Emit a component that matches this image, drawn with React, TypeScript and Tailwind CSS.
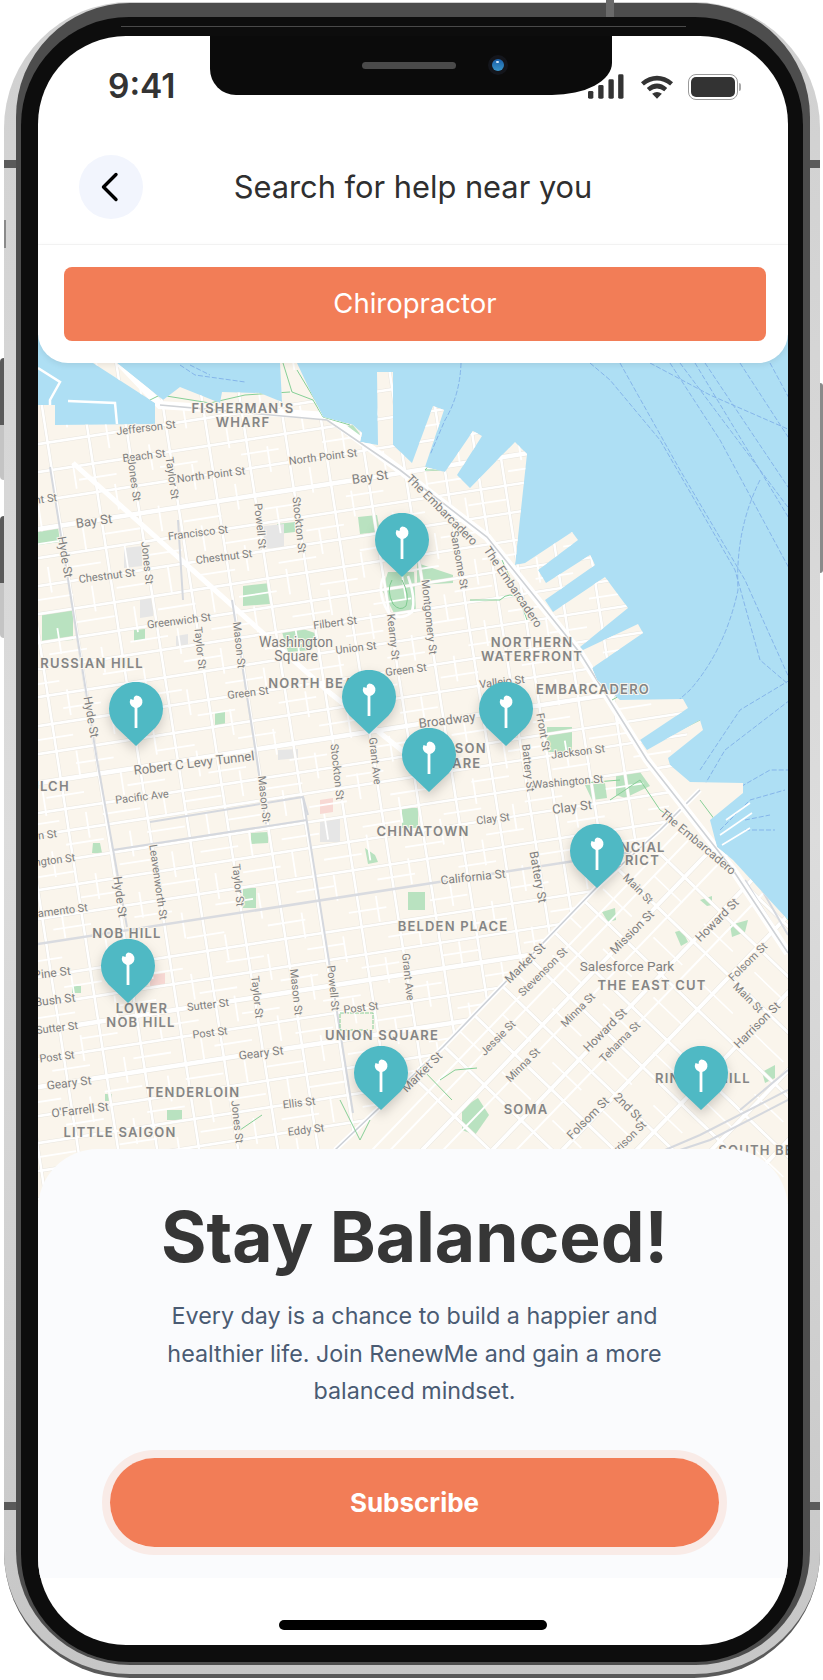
import React from "react";

// street centre lines, as intercepts read off the reference (y at x=0 / x at y=0)
const SLOPE = 0.155;
const ewMajor = [535, 789, 1093, 1037];
const ewRoads = [450, 478, 507, 564, 592, 620, 649, 675, 703, 732, 760, 819, 841, 870, 896, 925, 983, 1011, 1065, 1122, 1149, 1177, 1205, 1232];
const ewAlleys = [492, 550, 578, 606, 634, 662, 690, 718, 746, 775, 805, 830, 855, 883, 910, 938, 967, 997, 1024, 1051, 1079, 1108, 1135, 1163];
const nsRoads = [-140, -100, -60, -21, 21, 60, 100, 140, 178, 218, 256, 294, 332, 372, 405, 430, 470, 505];
const nsAlleys = [-80, -40, 1, 40, 80, 120, 160, 198, 237, 275, 313, 352, 388, 450];
const neRoads = [1537, 1556, 1611, 1687];
const neMajor = [1589, 1662, 1735, 1812, 1890, 1960];
const nwRoads = [170, 220, 276, 340, 400, 450, 504, 560, 620, 680];
const nwAlleys = [248, 310, 370, 425, 478, 532, 590];

const land =
  "M38 405 L55 405 L55 425 L155 424 L155 403 L93 363 L117 363 L163 400 L180 387 L220 403 L222 392 L260 393 L282 402 L280 363 L297 363 L313 397 L323 417 L353 425 L362 433 L360 442 L378 445 L377 372 L393 372 L393 445 L412 463 L433 406 L444 410 L425 467 L445 472 L473 431 L482 436 L457 475 L470 488 L515 442 L527 454 L515 565 L525 563 L572 532 L578 540 L538 570 L546 583 L590 555 L595 565 L545 600 L553 612 L605 577 L628 608 L580 647 L583 650 L638 624 L643 633 L592 668 L597 680 L620 700 L683 699 L688 708 L640 740 L647 750 L700 720 L703 730 L668 758 L670 765 L690 782 L743 783 L743 793 L710 820 L717 847 L733 860 L788 920 L788 1210 L38 1210 Z";

const parks = [
  "M42 612 L73 610 L73 640 L42 642 Z",
  "M243 586 L270 583 L270 604 L243 606 Z",
  "M277 524 L295 522 L295 532 L277 534 Z",
  "M134 630 L145 629 L145 640 L134 641 Z",
  "M215 712 L225 711 L225 726 L215 727 Z",
  "M358 517 L377 515 L380 532 L360 534 Z",
  "M388 572 L414 572 L416 612 L395 615 L382 590 Z",
  "M417 563 L453 575 L453 583 L417 585 Z",
  "M282 632 L300 628 L318 634 L312 650 L288 652 Z",
  "M547 727 L572 727 L572 752 L547 752 Z",
  "M251 833 L268 832 L268 843 L251 844 Z",
  "M243 888 L256 888 L256 908 L243 908 Z",
  "M402 808 L418 808 L418 828 L402 828 Z",
  "M408 892 L425 892 L425 910 L408 910 Z",
  "M167 1110 L182 1110 L182 1120 L167 1120 Z",
  "M72 986 L81 986 L81 993 L72 993 Z",
  "M105 1094 L112 1094 L112 1101 L105 1101 Z",
  "M365 848 L375 855 L378 862 L368 864 Z",
  "M93 843 L100 843 L102 853 L92 853 Z",
  "M616 775 L640 772 L650 786 L625 798 L616 795 Z",
  "M585 785 L605 783 L607 798 L592 800 Z",
  "M602 912 L615 908 L616 920 L608 922 Z",
  "M675 932 L682 930 L688 942 L681 946 Z",
  "M730 925 L748 920 L745 932 L732 937 Z",
  "M700 900 L712 896 L712 905 L707 906 Z",
  "M762 1072 L775 1065 L775 1078 L765 1083 Z",
  "M462 1108 L478 1098 L489 1115 L475 1135 L462 1130 Z",
  "M326 420 L352 424 L360 434 L358 442 Z",
  "M38 530 L58 527 L60 542 L38 545 Z",
];

const grayBlocks = [
  "M124 548 L142 546 L142 566 L124 568 Z",
  "M264 526 L284 524 L284 548 L264 548 Z",
  "M140 600 L153 598 L153 616 L140 618 Z",
  "M176 636 L188 634 L188 646 L176 646 Z",
  "M320 820 L340 818 L340 842 L320 842 Z",
  "M278 750 L298 749 L298 758 L278 760 Z",
];

const ferries = [
  "M461 363 Q460 395 445 420 L430 455",
  "M590 363 L610 380 L660 440 L735 570 L760 660 L795 690",
  "M620 363 L680 470 L745 580 L790 680",
  "M670 363 L720 440 L790 570",
  "M680 363 L760 470 L790 510",
  "M695 363 L790 520",
  "M705 363 L790 490",
  "M650 363 L710 395 L790 430",
  "M740 363 L790 440",
  "M770 363 L790 400",
  "M760 480 Q735 530 738 590 Q725 650 690 690 L645 730",
  "M790 680 L740 710 L700 770",
  "M790 700 L725 750 L690 810",
  "M735 790 L770 770 L788 770",
  "M720 830 L750 800 L785 790",
  "M745 820 L770 815 M745 830 L775 830",
  "M180 365 L195 375 L245 382",
  "M190 365 L210 375",
];

type MapLabel = [string, number, number, number, number?];

// text, x, y, rotation, size
const streetLabels: MapLabel[] = [
  ["Jefferson St", 146, 428, -7],
  ["Beach St", 144, 456, -7],
  ["Jones St", 134, 480, 82],
  ["Taylor St", 172, 478, 82],
  ["North Point St", 211, 475, -7],
  ["North Point St", 323, 457, -7],
  ["Bay St", 370, 477, -8, 13],
  ["Bay St", 94, 521, -8, 13],
  ["Point St", 38, 500, -7],
  ["Francisco St", 198, 533, -7],
  ["Powell St", 260, 526, 84],
  ["Stockton St", 299, 525, 84],
  ["Chestnut St", 224, 557, -7],
  ["Chestnut St", 107, 576, -7],
  ["Jones St", 147, 563, 84],
  ["Hyde St", 65, 557, 80, 12],
  ["Greenwich St", 179, 621, -7],
  ["Taylor St", 200, 648, 84],
  ["Mason St", 239, 645, 84],
  ["Filbert St", 335, 623, -7],
  ["Union St", 356, 648, -7],
  ["Green St", 406, 670, -7],
  ["Green St", 248, 693, -7],
  ["Kearny St", 393, 637, 84],
  ["Montgomery St", 429, 617, 84],
  ["Hyde St", 91, 717, 80, 12],
  ["Broadway", 447, 720, -7, 13],
  ["Robert C Levy Tunnel", 194, 763, -7, 13],
  ["Stockton St", 337, 772, 84],
  ["Grant Ave", 375, 761, 84],
  ["The Embarcadero", 442, 510, 45, 12],
  ["The Embarcadero", 513, 587, 56, 12],
  ["Sansome St", 459, 560, 80],
  ["Vallejo St", 502, 682, -7],
  ["Front St", 543, 732, 80],
  ["Jackson St", 578, 752, -7],
  ["Battery St", 528, 768, 84],
  ["Pacific Ave", 142, 797, -7],
  ["Mason St", 264, 799, 84],
  ["Washington St", 40, 862, -7],
  ["Jackson St", 30, 837, -7],
  ["Leavenworth St", 158, 882, 82],
  ["Hyde St", 120, 897, 82, 12],
  ["Taylor St", 238, 885, 84],
  ["Sacramento St", 52, 912, -7],
  ["California St", 473, 877, -6, 12],
  ["Market St", 525, 963, -45, 12],
  ["Stevenson St", 543, 972, -45],
  ["Main St", 638, 889, 45],
  ["Mission St", 632, 932, -45, 12],
  ["Howard St", 717, 920, -45, 12],
  ["The Embarcadero", 698, 842, 40, 12],
  ["Clay St", 572, 807, -7, 13],
  ["Clay St", 493, 819, -7],
  ["Washington St", 568, 782, -5],
  ["Battery St", 538, 877, 80, 12],
  ["Grant Ave", 408, 977, 84],
  ["Folsom St", 748, 962, -45],
  ["Main St", 748, 998, 45],
  ["Harrison St", 757, 1025, -45, 12],
  ["Minna St", 578, 1010, -45],
  ["Howard St", 605, 1030, -45, 12],
  ["Tehama St", 620, 1042, -45],
  ["Jessie St", 498, 1038, -45],
  ["Minna St", 523, 1065, -45],
  ["Folsom St", 588, 1118, -45, 12],
  ["2nd St", 628, 1107, 45, 12],
  ["Harrison St", 625, 1142, -45],
  ["Market St", 422, 1072, -45, 12],
  ["Sutter St", 208, 1005, -7],
  ["Taylor St", 257, 997, 84],
  ["Mason St", 296, 992, 84],
  ["Powell St", 333, 988, 84],
  ["Post St", 361, 1008, -7],
  ["Post St", 210, 1033, -7],
  ["Geary St", 261, 1053, -7, 12],
  ["Pine St", 52, 973, -7, 12],
  ["Bush St", 55, 1000, -7, 12],
  ["Sutter St", 57, 1028, -7],
  ["Post St", 57, 1057, -7],
  ["Geary St", 69, 1083, -7, 12],
  ["O'Farrell St", 80, 1110, -7, 12],
  ["Jones St", 237, 1122, 84],
  ["Ellis St", 299, 1103, -7],
  ["Eddy St", 306, 1130, -7],
];

const areaLabels: [string, number, number][] = [
  ["FISHERMAN'S", 243, 408],
  ["WHARF", 243, 422],
  ["RUSSIAN HILL", 92, 663],
  ["NORTH BEACH", 322, 683],
  ["NORTHERN", 532, 642],
  ["WATERFRONT", 532, 656],
  ["EMBARCADERO", 593, 689],
  ["JACKSON", 451, 748],
  ["SQUARE", 451, 763],
  ["GULCH", 44, 786],
  ["NOB HILL", 127, 933],
  ["BELDEN PLACE", 453, 926],
  ["CHINATOWN", 423, 831],
  ["FINANCIAL", 625, 847],
  ["DISTRICT", 625, 860],
  ["THE EAST CUT", 652, 985],
  ["RINCON HILL", 703, 1078],
  ["SOMA", 526, 1109],
  ["SOUTH BEACH", 772, 1150],
  ["LOWER", 142, 1008],
  ["NOB HILL", 141, 1022],
  ["UNION SQUARE", 382, 1035],
  ["TENDERLOIN", 193, 1092],
  ["LITTLE SAIGON", 120, 1132],
];

const pins = [
  { id: "coit", left: 375, top: 513 },
  { id: "polk", left: 109, top: 682 },
  { id: "beach", left: 342, top: 670 },
  { id: "front", left: 479, top: 682 },
  { id: "jackson", left: 402, top: 728 },
  { id: "fidi", left: 570, top: 824 },
  { id: "nob", left: 101, top: 939 },
  { id: "union", left: 354, top: 1046 },
  { id: "rincon", left: 674, top: 1046 },
];

const MARKET = "M700 790 L660 830 L597 887 L443 1047 L335 1150";
const EMBARCADERO = "M160 405 L327 420 L400 470 L487 537 L580 653 L647 760 L733 870 L788 953";

function StreetMap() {
  const ew = (c: number) => ({ x1: 0, y1: c, x2: 823, y2: c - SLOPE * 823 });
  const ns = (c: number) => ({ x1: c + SLOPE * 300, y1: 300, x2: c + SLOPE * 1300, y2: 1300 });
  const ne = (c: number) => ({ x1: 300, y1: c - 1.04 * 300, x2: 823, y2: c - 1.04 * 823 });
  const nw = (c: number) => ({ x1: 300, y1: c + 0.96 * 300, x2: 823, y2: c + 0.96 * 823 });

  return (
    <svg width="750" height="872" viewBox="38 335 750 872" className="block">
      <defs>
        <clipPath id="land">
          <path d={land} />
        </clipPath>
        <clipPath id="north">
          <path d="M38 335 L788 335 L664 826 L597 887 L443 1047 L335 1150 L300 1210 L38 1210 Z" />
        </clipPath>
        <clipPath id="south">
          <path d="M664 826 L800 880 L800 1210 L300 1210 L335 1150 L443 1047 L597 887 Z" />
        </clipPath>
      </defs>

      <rect x="38" y="335" width="750" height="872" fill="#aedff4" />

      <g fill="none" stroke="#85b5ea" strokeWidth="1" strokeDasharray="5 2">
        {ferries.map((d) => (
          <path key={d} d={d} />
        ))}
      </g>

      {/* old piers that are only a white outline */}
      <g fill="none" stroke="#ffffff">
        <path d="M38 368 L60 382 L50 400 L50 408" strokeWidth="2.5" />
        <path d="M68 401 L115 403 L117 424" strokeWidth="2.5" />
        <path d="M722 845 L750 828 M720 835 L752 813 M726 820 L750 803" strokeWidth="1.6" />
      </g>

      <path d={land} fill="#faf5ec" />

      <g clipPath="url(#land)">
        {parks.map((d) => (
          <path key={d} d={d} fill="#b9e2c0" />
        ))}
        {grayBlocks.map((d) => (
          <path key={d} d={d} fill="#e6e6e6" />
        ))}
        <path d="M320 800 L333 798 L333 812 L320 814 Z" fill="#f8d9d4" />
        <path d="M150 975 L165 973 L165 985 L150 987 Z" fill="#f8d9d4" />

        <g clipPath="url(#north)" fill="none">
          {/* light casing under the white streets */}
          <g stroke="#e9e6df">
            {ewRoads.map((c) => (
              <line key={c} {...ew(c)} strokeWidth="3.6" />
            ))}
            {nsRoads.map((c) => (
              <line key={c} {...ns(c)} strokeWidth="3.6" />
            ))}
            {ewMajor.map((c) => (
              <line key={c} {...ew(c)} strokeWidth="5.6" />
            ))}
          </g>
          <g stroke="#ffffff">
            {ewAlleys.map((c) => (
              <line key={c} {...ew(c)} strokeWidth="1.8" strokeDasharray="38 44" strokeDashoffset={c % 70} />
            ))}
            {nsAlleys.map((c) => (
              <line key={c} {...ns(c)} strokeWidth="1.8" strokeDasharray="26 36" strokeDashoffset={(c + 200) % 60} />
            ))}
            {ewRoads.map((c) => (
              <line key={c} {...ew(c)} strokeWidth="2.6" />
            ))}
            {nsRoads.map((c) => (
              <line key={c} {...ns(c)} strokeWidth="2.6" />
            ))}
            {ewMajor.map((c) => (
              <line key={c} {...ew(c)} strokeWidth="4.5" />
            ))}
            <path d="M73 463 L330 693 L404 752" strokeWidth="5" />
          </g>
          <line {...ew(950)} stroke="#d9dbe0" strokeWidth="2.5" />
        </g>

        <g clipPath="url(#south)" fill="none">
          <g stroke="#e9e6df">
            {neMajor.map((c) => (
              <line key={c} {...ne(c)} strokeWidth="5" />
            ))}
            {nwRoads.map((c) => (
              <line key={c} {...nw(c)} strokeWidth="4" />
            ))}
          </g>
          <g stroke="#ffffff">
            {nwAlleys.map((c) => (
              <line key={c} {...nw(c)} strokeWidth="1.6" strokeDasharray="40 30" />
            ))}
            {neRoads.map((c) => (
              <line key={c} {...ne(c)} strokeWidth="2" />
            ))}
            {neMajor.map((c) => (
              <line key={c} {...ne(c)} strokeWidth="4" />
            ))}
            {nwRoads.map((c) => (
              <line key={c} {...nw(c)} strokeWidth="3" />
            ))}
          </g>
        </g>

        {/* cable car lines and the big roads on top of the grid */}
        <g fill="none" stroke="#d5d8de" strokeWidth="2">
          <path d="M50 467 L97 760 L127 927" />
          <path d="M178 520 L183 600" />
          <path d="M232 600 L257 760 L266 824" />
          <path d="M303 797 L353 1113" />
          <path d="M113 850 L307 820" />
          <path d="M150 822 L303 797 L308 815" />
          <path d="M745 880 L788 950 M755 878 L788 935" />
          <path d="M788 1090 L700 1135 L665 1150 M788 1100 L710 1140 L680 1150 M788 1070 L740 1110" />
        </g>
        <path d={MARKET} fill="none" stroke="#ffffff" strokeWidth="5" />
        <path d={MARKET} fill="none" stroke="#ccd0d6" strokeWidth="1.6" />
        <path d="M120 363 L160 405 L327 416 L400 470 L487 537 L580 653 L647 760 L733 870 L788 953" fill="none" stroke="#ffffff" strokeWidth="8" />
        <path d={EMBARCADERO} fill="none" stroke="#cfd2d6" strokeWidth="1.6" />

        {/* green paths */}
        <g fill="none" stroke="#86cf96" strokeWidth="1">
          <path d="M283 363 L292 392 L313 400 L323 417 L350 425" />
          <path d="M297 370 L318 405" />
          <path d="M120 415 L160 395 L210 403 L245 395 L290 392" />
          <path d="M502 560 L520 600 L527 620 M500 600 Q510 590 520 600 M470 600 L500 600" />
          <path d="M434 460 L425 470 L440 470 L443 460 Z" />
          <path d="M612 700 L670 668" />
          <path d="M650 745 L700 720" />
          <path d="M560 785 L620 780 M610 800 L640 780 L660 810 L675 820" />
          <path d="M730 830 L760 840 M700 800 L745 860 L788 920" />
          <path d="M420 1067 L452 1100 M440 1080 L455 1070 L477 1068" />
          <path d="M340 1100 L360 1140 L370 1120" />
          <path d="M340 1013 L373 1013 L373 1030 L340 1030 Z" strokeDasharray="4 1" />
          <path d="M240 1130 L262 1115" />
          <path d="M392 580 Q386 590 393 604 Q400 612 406 606 Q410 595 402 580" stroke="#7fcb90" />
        </g>
        <path d="M384 576 Q376 590 388 612 Q400 622 412 612 Q416 598 408 576" fill="none" stroke="#ffffff" strokeWidth="2.5" />
      </g>

      <g fontFamily="Roboto, sans-serif" fill="#7f7f80" stroke="#faf5ec" strokeWidth="2" paintOrder="stroke" textAnchor="middle">
        {streetLabels.map(([text, x, y, rot, size]) => (
          <text
            key={`${text}-${x}-${y}`}
            x={x}
            y={y}
            fontSize={size ?? 11}
            dominantBaseline="central"
            transform={`rotate(${rot} ${x} ${y})`}
          >
            {text}
          </text>
        ))}
        <text x="296" y="642" fontSize="14" dominantBaseline="central">Washington</text>
        <text x="296" y="656" fontSize="14" dominantBaseline="central">Square</text>
        <text x="627" y="966" fontSize="13.5" dominantBaseline="central">Salesforce Park</text>
      </g>

      <g fontFamily="Inter, sans-serif" fontWeight="600" fontSize="13" letterSpacing="1.2" fill="#858585" stroke="#faf5ec" strokeWidth="2" paintOrder="stroke" textAnchor="middle">
        {areaLabels.map(([text, x, y]) => (
          <text key={`${text}-${x}`} x={x} y={y} dominantBaseline="central">
            {text}
          </text>
        ))}
      </g>
    </svg>
  );
}

function MapPin({ left, top }: { left: number; top: number }) {
  return (
    <svg
      width="54"
      height="64"
      viewBox="0 0 54 64"
      className="absolute drop-shadow-[0_5px_6px_rgba(0,0,0,0.18)]"
      style={{ left: left - 38, top: top - 335 }}
    >
      <path d="M27 64 L7.5 45.5 A27 27 0 1 1 46.5 45.5 Z" fill="#4fb9c4" />
      <path d="M27 13.5 A6.3 6.3 0 1 1 21.5 17 L24.5 18 L25 15 Z" fill="#ffffff" />
      <rect x="25.6" y="20" width="2.8" height="26" fill="#ffffff" />
    </svg>
  );
}

function StatusIcons() {
  return (
    <div className="flex items-center">
      <svg width="36" height="25" viewBox="0 0 37 25" className="mr-[16px]">
        <rect x="0" y="17" width="5.5" height="8" rx="1.5" fill="#333" />
        <rect x="10.5" y="11" width="5.5" height="14" rx="1.5" fill="#333" />
        <rect x="21" y="5" width="5.5" height="20" rx="1.5" fill="#333" />
        <rect x="31" y="0" width="5.5" height="25" rx="1.5" fill="#333" />
      </svg>
      <svg width="34" height="25" viewBox="0 0 35 25" className="mr-[14px]">
        <path d="M1 8 Q17.5 -5 34 8 L31 11.5 Q17.5 1 4 11.5 Z" fill="#333" />
        <path d="M7 14 Q17.5 5 28 14 L25 17.5 Q17.5 11.5 10 17.5 Z" fill="#333" />
        <path d="M12.5 20 Q17.5 16.5 22.5 20 L17.5 25 Z" fill="#333" />
      </svg>
      <div className="flex items-center gap-[1px]">
        <div className="w-[50px] h-[26px] rounded-[8px] border-[1.5px] border-[#9a9a9a] p-[2px]">
          <div className="w-full h-full rounded-[5px] bg-[#333]" />
        </div>
        <div className="w-[2px] h-[8px] rounded-r-sm bg-[#a8a8a8]" />
      </div>
    </div>
  );
}

function Notch() {
  return (
    <div className="absolute left-[172px] top-0 w-[402px] h-[59px] bg-[#0b0b0b] rounded-bl-[26px] rounded-br-[60px_32px] z-30">
      <div className="absolute left-[152px] top-[26px] w-[94px] h-[7px] rounded-full bg-[#4a4a4a]" />
      <div className="absolute left-[278px] top-[19px] w-[20px] h-[20px] rounded-full bg-[#14161c] flex items-center justify-center">
        <div className="relative w-[12px] h-[12px] rounded-full bg-gradient-to-b from-[#1a5fa8] to-[#3a94c8]">
          <div className="absolute left-[4px] top-[2px] w-[3px] h-[2px] rounded-full bg-[#cfe6f7]" />
        </div>
      </div>
    </div>
  );
}

export default function App() {
  return (
    <div className="relative w-[823px] h-[1680px] overflow-hidden bg-white [font-family:Inter,sans-serif]">
      {/* side buttons */}
      <div className="absolute left-0 top-[358px] w-[8px] h-[122px] rounded-l flex flex-col overflow-hidden">
        <div className="h-[67px] bg-[#5a5a5a]" />
        <div className="flex-1 bg-[#c4c4c4]" />
      </div>
      <div className="absolute left-0 top-[516px] w-[8px] h-[122px] rounded-l flex flex-col overflow-hidden">
        <div className="h-[67px] bg-[#5a5a5a]" />
        <div className="flex-1 bg-[#c4c4c4]" />
      </div>
      <div className="absolute right-0 top-[383px] w-[3px] h-[190px] rounded-r bg-[#8a8a8a]" />

      {/* phone frame */}
      <div className="absolute left-[4px] top-[2px] w-[816px] h-[1676px] rounded-[126px] bg-gradient-to-b from-[#d0d0d0] via-[#dcdcdc] to-[#c6c6c6] border-b-[4px] border-[#5a5a5a] pt-[1px] pl-[12px] pr-[10px] pb-[9px]">
        <div className="w-full h-full rounded-[114px] bg-[#4d4d4d] pt-[14px] pl-[5px] pr-[7px] pb-[3px]">
          <div className="relative w-full h-full rounded-[108px] bg-[#0d0d0d] pt-[19px] pl-[17px] pr-[15px] pb-[17px]">
            <div className="absolute left-[100px] top-[9px] w-[565px] h-[1px] bg-[#4a4a4a]" />
            <div className="relative w-full h-full rounded-[88px] bg-white overflow-hidden flex flex-col">
              <Notch />

              {/* status + title */}
              <div className="h-[209px] shrink-0 border-b border-[#f6f6f6] flex flex-col">
                <div className="flex items-center justify-between pt-[37px] pl-[70px] pr-[47px] h-[64px]">
                  <span className="text-[33.5px] leading-none font-semibold text-[#333]">9:41</span>
                  <StatusIcons />
                </div>
                <div className="relative flex items-center justify-center mt-[55px] h-[64px]">
                  <button className="absolute left-[41px] w-[64px] h-[64px] rounded-full bg-[#f2f5fd] flex items-center justify-center">
                    <svg width="20" height="30" viewBox="0 0 20 30" fill="none" className="-ml-[3px]">
                      <path d="M16 2.5 L3.5 15 L16 27.5" stroke="#000" strokeWidth="3.4" strokeLinecap="round" strokeLinejoin="round" />
                    </svg>
                  </button>
                  <h1 className="text-[30.8px] leading-none font-normal text-[#2f2f2f]">Search for help near you</h1>
                </div>
              </div>

              {/* category */}
              <div className="relative z-10 h-[118px] shrink-0 bg-white rounded-b-[30px] pl-[26px] pr-[22px] pt-[22px] shadow-[0_2px_6px_rgba(0,0,0,0.08)]">
                <div className="h-[74px] rounded-[8px] bg-[#f27d57] flex items-center justify-center text-white text-[27.5px]">
                  Chiropractor
                </div>
              </div>

              {/* map */}
              <div className="relative -mt-[28px] h-[872px] shrink-0">
                <StreetMap />
                {pins.map((pin) => (
                  <MapPin key={pin.id} left={pin.left} top={pin.top} />
                ))}
              </div>

              {/* subscribe card */}
              <div className="relative z-10 -mt-[58px] h-[429px] shrink-0 rounded-t-[60px] bg-[#fafbfd] pl-[3px] flex flex-col items-center">
                <h2 className="mt-[48px] text-[69.5px] leading-[80px] font-bold text-[#363636]">Stay Balanced!</h2>
                <p className="mt-[20px] w-[520px] text-center text-[23.3px] leading-[37.5px] text-[#4a5b73]">
                  Every day is a chance to build a happier and healthier life. Join RenewMe and gain a more balanced mindset.
                </p>
                <div className="mt-[40px] rounded-full border-[8px] border-[#f9ebe7]">
                  <button className="w-[609px] h-[89px] rounded-full bg-[#f27d57] text-white text-[26px] font-bold">Subscribe</button>
                </div>
              </div>

              {/* home indicator */}
              <div className="flex-1 flex items-end justify-center pb-[15px]">
                <div className="w-[268px] h-[10px] rounded-full bg-black" />
              </div>
            </div>
          </div>
        </div>
      </div>

      {/* antenna bands */}
      <div className="absolute left-[4px] top-[160px] w-[12px] h-[8px] bg-[#5a5a5a]" />
      <div className="absolute left-[810px] top-[160px] w-[10px] h-[8px] bg-[#5a5a5a]" />
      <div className="absolute left-[4px] top-[1502px] w-[12px] h-[8px] bg-[#5a5a5a]" />
      <div className="absolute left-[810px] top-[1502px] w-[10px] h-[8px] bg-[#5a5a5a]" />
      <div className="absolute left-[606px] top-0 w-[8px] h-[17px] bg-[#6a6a6a]" />
      <div className="absolute left-[4px] top-[220px] w-[2px] h-[28px] bg-[#8a8a8a]" />
    </div>
  );
}
